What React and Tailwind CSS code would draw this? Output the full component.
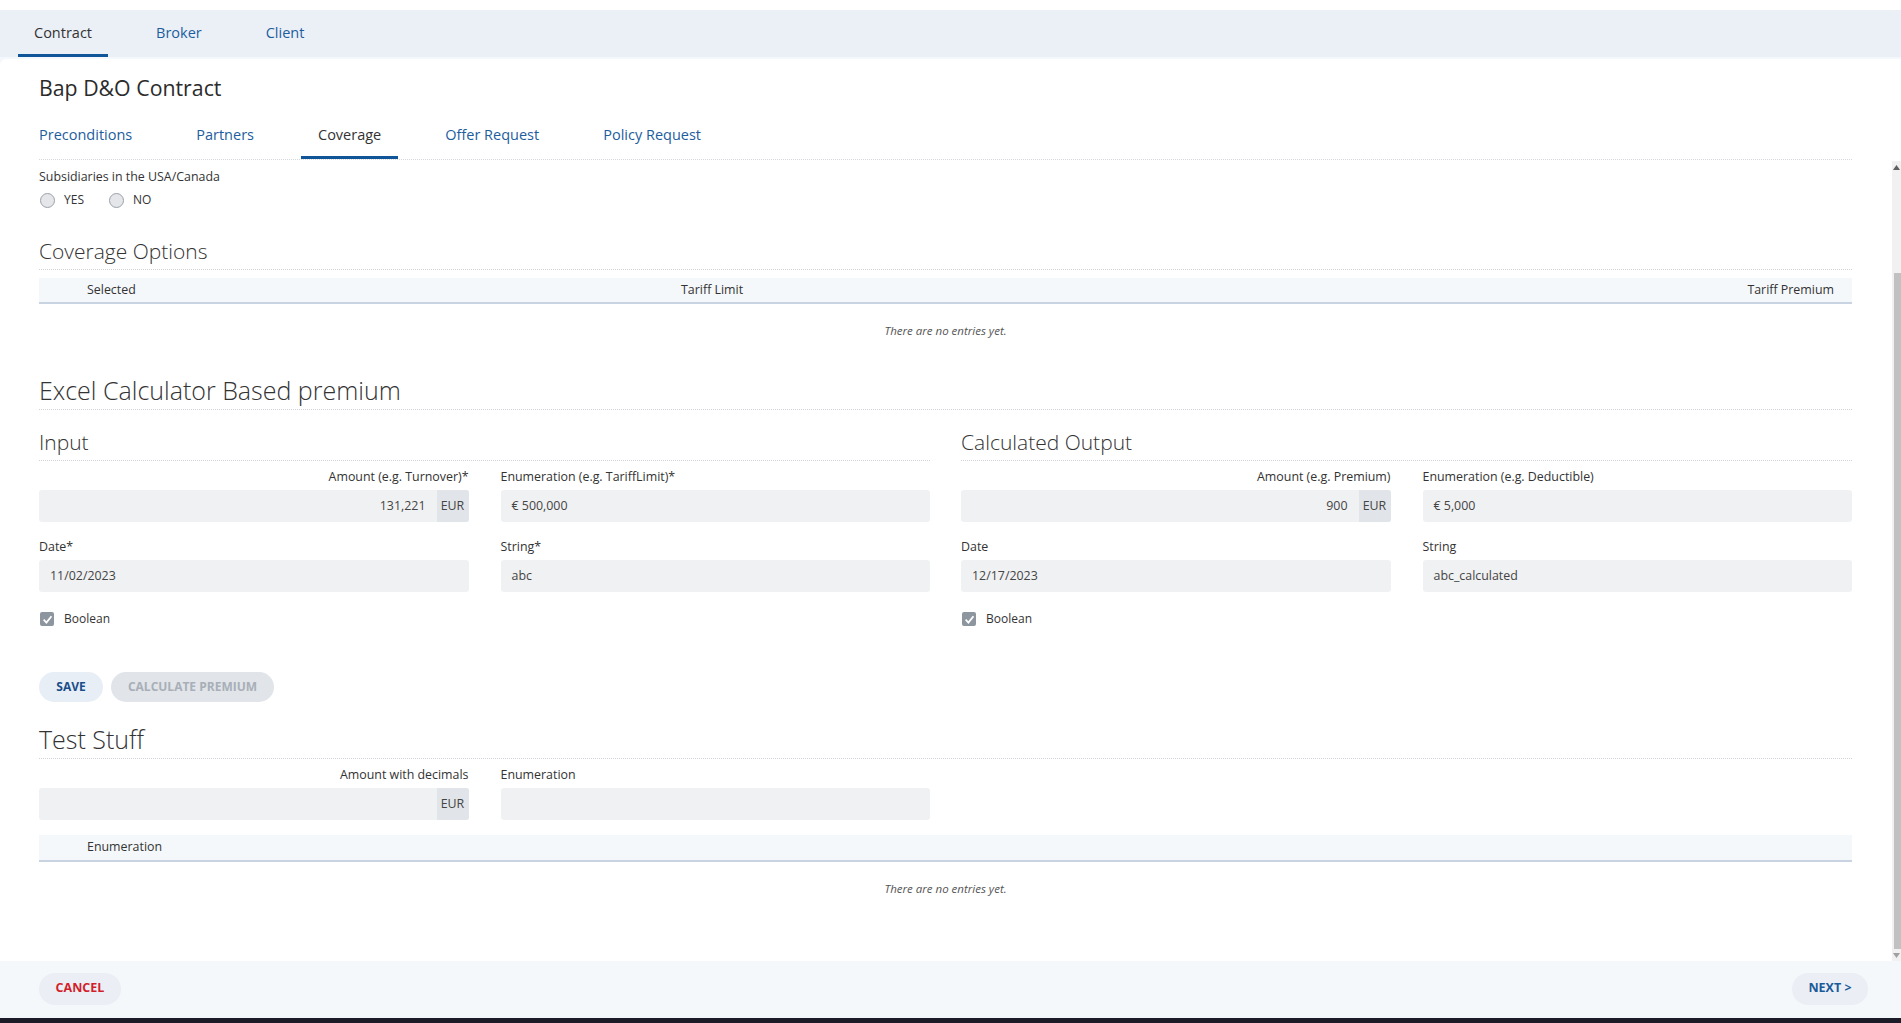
import React from 'react';

const labelCls = 'text-[12.4px] leading-4 text-[#333]';

const InputBox = ({ value, align = 'left', addon }) => (
  <div className="h-8 flex rounded-[3px] bg-[#f0f1f3] overflow-hidden">
    <div className={`flex-1 flex items-center px-[11px] text-[12.4px] text-[#444] ${align === 'right' ? 'justify-end' : ''}`}>
      {value}
    </div>
    {addon && (
      <div className="w-8 flex items-center justify-center bg-[#e1e4e8] text-[12.4px] text-[#444]">{addon}</div>
    )}
  </div>
);

const Field = ({ label, value, align, addon }) => (
  <div className="flex flex-col gap-[5px]">
    <span className={`${labelCls} ${align === 'right' ? 'text-right' : ''}`}>{label}</span>
    <InputBox value={value} align={align} addon={addon} />
  </div>
);

const CheckRow = () => (
  <div className="flex items-center gap-[10px] h-4 mt-[19px] pl-[1px]">
    <span className="w-[14px] h-[14px] rounded-[2px] bg-[#8d969f] flex items-center justify-center">
      <svg width="11" height="11" viewBox="0 0 10 10">
        <path d="M1.5 5.2 L4 7.8 L8.6 2" fill="none" stroke="#fff" strokeWidth="1.6" />
      </svg>
    </span>
    <span className="text-[12px] text-[#333]">Boolean</span>
  </div>
);

const Radio = ({ label }) => (
  <div className="flex items-center gap-[9px]">
    <span className="w-[15px] h-[15px] rounded-full bg-[#e4e6ea] border border-[#9ba1a8]" />
    <span className="text-[12px] text-[#333]">{label}</span>
  </div>
);

const EmptyRow = () => (
  <div className="h-[54px] flex items-center justify-center text-[11.5px] italic text-[#555]">There are no entries yet.</div>
);

const Heading = ({ children, size = 'lg', className = '' }) => (
  <div
    className={`border-b border-dotted border-[#cfd3d8] font-light text-[#333] ${
      size === 'lg' ? 'text-[25px] leading-8 pb-[3px]' : 'text-[21px] leading-[27px] pb-[4px]'
    } ${className}`}
  >
    {children}
  </div>
);

export default function App() {
  const subTabs = ['Preconditions', 'Partners', 'Coverage', 'Offer Request', 'Policy Request'];

  return (
    <div className="h-[1023px] w-[1901px] flex flex-col bg-[#f4f7fb] font-['Open_Sans',sans-serif] overflow-hidden">
      <div className="h-[10px] bg-white" />

      {/* Top tabs */}
      <div className="h-[47px] bg-[#ebf0f7] flex gap-8 pl-[18px]">
        {['Contract', 'Broker', 'Client'].map((t, i) => (
          <div
            key={t}
            className={`h-full flex items-center px-4 pt-[2px] border-b-[3px] text-[14.5px] ${
              i === 0 ? 'border-[#0f5598] text-[#333]' : 'border-transparent text-[#1d5d9e]'
            }`}
          >
            {t}
          </div>
        ))}
      </div>

      <div className="flex-1 mt-[2px] bg-white rounded-tl-md flex flex-col min-h-0">
        {/* Title + sub tabs */}
        <div className="px-[39px] pr-[49px]">
          <div className="pt-[15px] text-[21.3px] leading-[27px] text-[#2b2b2b]">Bap D&amp;O Contract</div>
          <div className="mt-[13px] border-b border-dotted border-[#d5d8dc]">
            <div className="flex gap-[30px] -ml-[17px]">
              {subTabs.map((t) => (
                <div
                  key={t}
                  className={`h-[45px] px-[17px] flex items-center border-b-[3px] text-[14.5px] ${
                    t === 'Coverage' ? 'border-[#0f5598] text-[#333]' : 'border-transparent text-[#1d5d9e]'
                  }`}
                >
                  {t}
                </div>
              ))}
            </div>
          </div>
        </div>

        {/* Scroll area */}
        <div className="flex-1 min-h-0 flex mt-[1px]">
          <div className="flex-1 pl-[39px] pr-[40px] overflow-hidden">
            <div className="pt-[8px] text-[12.4px] leading-4 text-[#333]">Subsidiaries in the USA/Canada</div>
            <div className="mt-[7px] h-4 flex items-center gap-[25px] pl-[1px]">
              <Radio label="YES" />
              <Radio label="NO" />
            </div>

            <Heading size="md" className="mt-[30px]">Coverage Options</Heading>
            <div className="mt-2 h-[26px] bg-[#f5f8fb] border-b-2 border-[#c8d4e2] flex items-center text-[12.4px] text-[#333]">
              <span className="pl-12 w-[642px]">Selected</span>
              <span className="flex-1">Tariff Limit</span>
              <span className="pr-[18px]">Tariff Premium</span>
            </div>
            <EmptyRow />

            <Heading className="mt-[16px]">Excel Calculator Based premium</Heading>

            <div className="grid grid-cols-2 gap-[31px]">
              {[
                {
                  title: 'Input',
                  amount: ['Amount (e.g. Turnover)*', '131,221'],
                  enumeration: ['Enumeration (e.g. TariffLimit)*', '€ 500,000'],
                  date: ['Date*', '11/02/2023'],
                  str: ['String*', 'abc'],
                },
                {
                  title: 'Calculated Output',
                  amount: ['Amount (e.g. Premium)', '900'],
                  enumeration: ['Enumeration (e.g. Deductible)', '€ 5,000'],
                  date: ['Date', '12/17/2023'],
                  str: ['String', 'abc_calculated'],
                },
              ].map((c) => (
                <div key={c.title}>
                  <Heading size="md" className="mt-[19px]">{c.title}</Heading>
                  <div className="mt-[8px] grid grid-cols-2 gap-x-8 gap-y-[17px]">
                    <Field label={c.amount[0]} value={c.amount[1]} align="right" addon="EUR" />
                    <Field label={c.enumeration[0]} value={c.enumeration[1]} />
                    <Field label={c.date[0]} value={c.date[1]} />
                    <Field label={c.str[0]} value={c.str[1]} />
                  </div>
                  <CheckRow />
                </div>
              ))}
            </div>

            <div className="mt-[45px] flex gap-2">
              <button className="h-[30px] w-16 rounded-full bg-[#e8eef6] text-[12px] font-bold text-[#1a4e8a]">SAVE</button>
              <button className="h-[30px] w-[163px] rounded-full bg-[#e1e4e8] text-[12px] font-bold text-[#a8afb8]">CALCULATE PREMIUM</button>
            </div>

            <Heading className="mt-[21px] pb-[2px]">Test Stuff</Heading>
            <div className="mt-[8px] w-[891px] grid grid-cols-2 gap-x-8">
              <Field label="Amount with decimals" value="" align="right" addon="EUR" />
              <Field label="Enumeration" value="" />
            </div>
            <div className="mt-[15px] h-[27px] bg-[#f5f8fb] border-b-2 border-[#c8d4e2] flex items-center text-[12.4px] text-[#333]">
              <span className="pl-12">Enumeration</span>
            </div>
            <EmptyRow />
          </div>

          {/* scrollbar */}
          <div className="w-[9px] bg-[#f1f1f1] flex flex-col items-end">
            <div className="h-[12px] w-full flex items-center justify-center">
              <svg width="7" height="5" viewBox="0 0 7 5"><path d="M0 5 L3.5 0 L7 5 Z" fill="#606060" /></svg>
            </div>
            <div className="h-[100px]" />
            <div className="flex-1 w-[7px] bg-[#c1c1c1]" />
            <div className="h-[12px] w-full flex items-center justify-center">
              <svg width="7" height="5" viewBox="0 0 7 5"><path d="M0 0 L3.5 5 L7 0 Z" fill="#a0a0a0" /></svg>
            </div>
          </div>
        </div>

        {/* Footer */}
        <div className="h-[57px] bg-[#f5f8fb] flex items-center justify-between pl-[39px] pr-[33px] pb-[2px]">
          <button className="h-8 w-[82px] rounded-full bg-[#ebeff5] text-[12.5px] font-bold text-[#d21f2b]">CANCEL</button>
          <button className="h-8 w-[76px] rounded-full bg-[#ebeff5] text-[12.5px] font-bold text-[#1a5a9a]">NEXT &gt;</button>
        </div>
      </div>

      <div className="h-[5px] bg-[#1c1c28]" />
    </div>
  );
}
